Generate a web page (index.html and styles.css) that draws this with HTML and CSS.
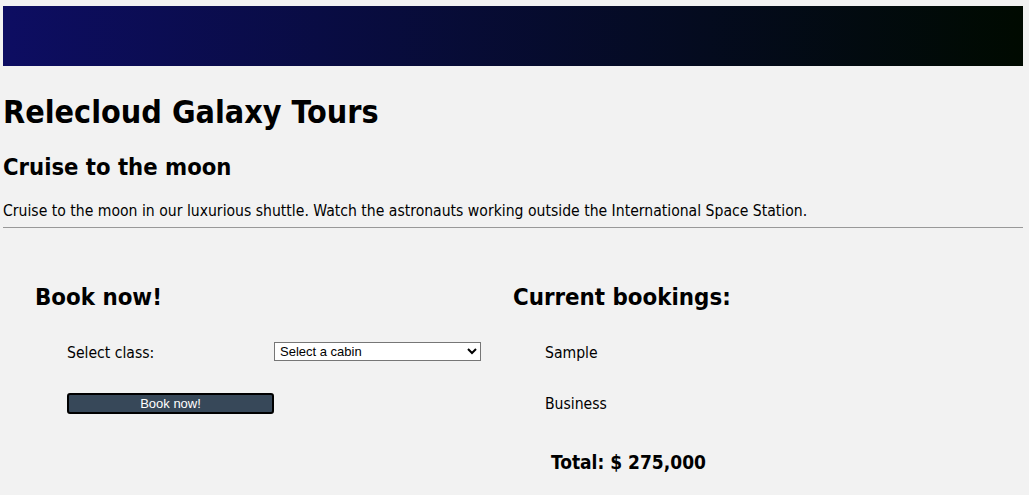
FILE: index.html
```html
<!DOCTYPE html>
<html lang="en">
<head>
<meta charset="utf-8">
<title>Relecloud Galaxy Tours</title>
<link rel="stylesheet" href="styles.css">
</head>
<body>
<div class="page">
  <div class="banner"></div>
  <h1 class="title">Relecloud Galaxy Tours</h1>
  <h2 class="subtitle">Cruise to the moon</h2>
  <p class="desc">Cruise to the moon in our luxurious shuttle. Watch the astronauts working outside the International Space Station.</p>
  <hr class="rule">
  <div class="columns">
    <section class="col col-left">
      <h2 class="col-title">Book now!</h2>
      <div class="form-row">
        <span class="label">Select class:</span>
        <select class="cabin">
          <option>Select a cabin</option>
          <option>Sample</option>
          <option>Business</option>
        </select>
      </div>
      <div class="form-row">
        <button class="book-btn" type="button">Book now!</button>
      </div>
    </section>
    <section class="col col-right">
      <h2 class="col-title">Current bookings:</h2>
      <div class="booking">Sample</div>
      <div class="booking">Business</div>
      <div class="total">Total: $ 275,000</div>
    </section>
  </div>
</div>
</body>
</html>
```

FILE: styles.css
```css
html, body {
  margin: 0;
  padding: 0;
  background: #f2f2f2;
}
body {
  font-family: "DejaVu Sans Condensed", "DejaVu Sans", sans-serif;
  color: #000;
}
.page {
  padding: 6px 6px 0 3px;
}
.banner {
  height: 60px;
  background: linear-gradient(to right, #0d0d62, #000a00);
}
.title {
  font-size: 32px;
  font-weight: bold;
  margin: 27px 0 0 0;
  line-height: 38px;
}
.subtitle {
  font-size: 23.6px;
  font-weight: bold;
  margin: 21px 0 0 0;
  line-height: 30px;
}
.desc {
  font-size: 15.6px;
  margin: 19px 0 0 0;
  line-height: 20px;
}
.rule {
  margin: 6px 0 0 0;
  border: 0;
  border-top: 1px solid #999;
  height: 0;
}
.columns {
  display: grid;
  grid-template-columns: 1fr 1fr;
  margin-top: 54px;
}
.col-left {
  padding-left: 32px;
}
.col-title {
  font-size: 23.8px;
  font-weight: bold;
  margin: 0;
  line-height: 30px;
}
.form-row {
  display: flex;
  align-items: center;
  margin-left: 32px;
  height: 20px;
  margin-top: 31px;
}
.form-row + .form-row {
  margin-top: 30px;
}
.label {
  font-size: 15.6px;
  width: 207px;
  line-height: 20px;
}
.cabin {
  width: 207px;
  height: 19px;
  margin-bottom: 4px;
  font-family: "Liberation Sans", Arial, sans-serif;
  font-size: 13px;
  padding: 0 1px;
  background: #fff;
  border: 1px solid #767676;
  border-radius: 0;
  color: #000;
}
.book-btn {
  width: 207px;
  height: 21px;
  background: #374859;
  color: #fff;
  border: 2px solid #000;
  border-radius: 3px;
  font-family: "Liberation Sans", Arial, sans-serif;
  font-size: 13px;
  padding: 0;
}
.booking {
  font-size: 15.6px;
  margin-left: 32px;
  margin-top: 31px;
  line-height: 20px;
}
.total {
  font-size: 19px;
  font-weight: bold;
  margin-left: 38px;
  margin-top: 36px;
  line-height: 24px;
}
```
